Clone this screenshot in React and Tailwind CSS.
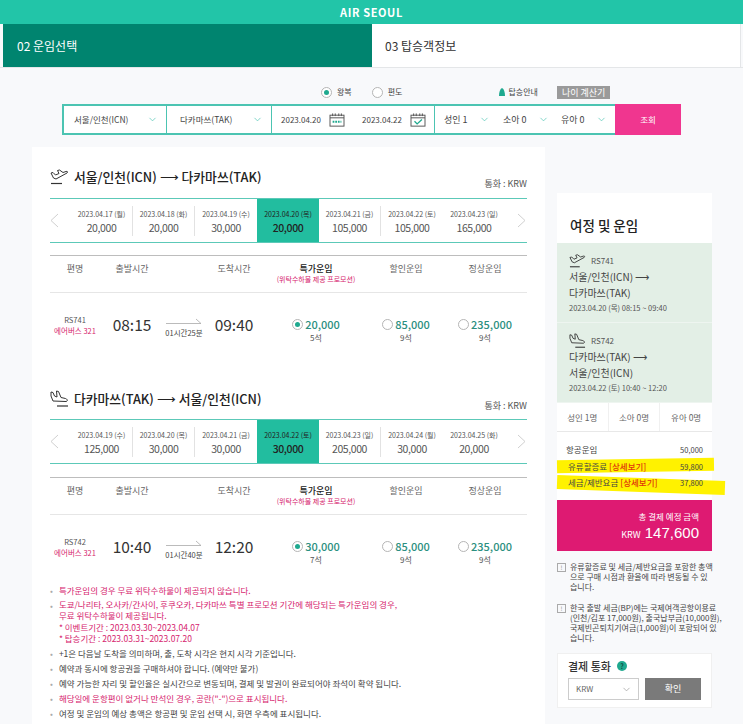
import { ChevronDown } from 'lucide-react'

const FONT = "font-['Noto_Sans_CJK_KR','Noto_Sans',sans-serif]"
const COLS = 'grid-cols-[50px_64px_40px_60px_104px_76px_82px]'

function TakeoffIcon({ className }) {
  return (
    <svg viewBox="0 0 19 18" className={className} fill="none" stroke="#333" strokeWidth="1">
      <path d="M1 5 L3 4.5 L5.5 7 L9 5.5 L7.5 2.5 L9.5 2 L13 4.5 L16 3.5 C17.5 3 18 4 17 5 L6 11 L3.5 10 Z" />
      <path d="M1 15.5 H12" strokeWidth="1.2" />
    </svg>
  )
}

function LandingIcon({ className }) {
  return (
    <svg viewBox="0 0 19 18" className={className} fill="none" stroke="#333" strokeWidth="1">
      <path d="M1 2 L3 2.5 L4.5 6 L7 7 L6.5 1 L8.5 1.5 L11 7.5 L15.5 8.5 C17.5 9 18 11.5 16 11.5 L3 11 L1 6 Z" />
      <path d="M7 16 H18" strokeWidth="1.2" />
    </svg>
  )
}

function CalendarIcon({ check }) {
  return (
    <svg viewBox="0 0 18 16" className="h-[14px] w-4 shrink-0" fill="none" stroke="#555" strokeWidth="1.1">
      <rect x="1" y="2.5" width="16" height="12.5" />
      <path d="M1 5.5 H17 M4 0.5 V3.5 M7 0.5 V3.5 M11 0.5 V3.5 M14 0.5 V3.5" />
      {check ? (
        <path d="M5 9.5 L8 12.5 L13.5 7.5" stroke="#1fa98f" strokeWidth="1.5" />
      ) : (
        <path d="M4 10 H14" stroke="#1fa98f" strokeWidth="2.5" strokeDasharray="2 1" />
      )}
    </svg>
  )
}

function Radio({ on }) {
  return (
    <span className="flex h-[11px] w-[11px] shrink-0 items-center justify-center rounded-full border border-[#b5b5b5] bg-white">
      {on && <span className="h-[5px] w-[5px] rounded-full bg-[#1fa98f]" />}
    </span>
  )
}

function DateStrip({ days, active }) {
  return (
    <div className="flex h-[45px] border-y border-[#5cc9b8]">
      <div className="flex w-[21px] items-center justify-start">
        <svg viewBox="0 0 9 15" className="h-[15px] w-[9px]" fill="none" stroke="#d0d0d0">
          <path d="M8 1 L1 7.5 L8 14" />
        </svg>
      </div>
      {days.map((d, i) => (
        <div key={d[0]} className="flex w-[62px]">
          <div
            className={`flex flex-1 flex-col items-center justify-center pt-[2px] ${i === active ? 'bg-[#22bd9f] text-[#222]' : 'text-[#555]'}`}
          >
            <span className="text-[7px] leading-[12px]">{d[0]}</span>
            <span className={`text-[10.5px] leading-[16px] tracking-[-0.4px] ${i === active ? 'font-medium' : ''}`}>{d[1]}</span>
          </div>
          {i < 5 && i !== active && i + 1 !== active && <span className="h-[30px] w-px self-center bg-[#e2e2e2]" />}
        </div>
      ))}
      <div className="flex w-[21px] items-center justify-end">
        <svg viewBox="0 0 9 15" className="h-[15px] w-[9px]" fill="none" stroke="#d0d0d0">
          <path d="M1 1 L8 7.5 L1 14" />
        </svg>
      </div>
    </div>
  )
}

function FareHead() {
  return (
    <div className={`grid h-[38px] ${COLS} border-y border-t-[#bdbdbd] border-b-[#e6e6e6] pt-[7px] text-center text-[9px] leading-[12px] text-[#666]`}>
      <span>편명</span>
      <span>출발시간</span>
      <span />
      <span>도착시간</span>
      <div className="flex flex-col text-[#222]">
        <span className="font-medium">특가운임</span>
        <span className="text-[7px] leading-[9px] text-[#d6246e]">(위탁수하물 제공 프로모션)</span>
      </div>
      <span>할인운임</span>
      <span>정상운임</span>
    </div>
  )
}

function Fare({ price, seats, on }) {
  return (
    <div className="flex flex-col items-center pt-[23px]">
      <div className="flex items-center gap-[2px]">
        <Radio on={on} />
        <span className="text-[11px] font-medium leading-[16px] text-[#2c8f80]">{price}</span>
      </div>
      <span className="mt-px text-[8px] leading-[10px] text-[#555]">{seats}</span>
    </div>
  )
}

function FlightRow({ no, dep, dur, arr, price, seats }) {
  return (
    <div className={`grid h-[60px] ${COLS} items-start`}>
      <div className="flex flex-col items-center pt-[21px] text-[7.5px] leading-[11px]">
        <span className="text-[#555]">{no}</span>
        <span className="text-[#d6246e]">에어버스 321</span>
      </div>
      <span className="pt-[21px] text-center text-[15.5px] leading-[20px] text-[#333]">{dep}</span>
      <div className="flex flex-col items-center pt-[25px]">
        <svg viewBox="0 0 36 6" className="h-[6px] w-[36px]" fill="none" stroke="#aaa" strokeWidth="0.8">
          <path d="M0 5.5 H35 L30 1" />
        </svg>
        <span className="mt-1 whitespace-nowrap text-[7.5px] leading-[10px] text-[#444]">{dur}</span>
      </div>
      <span className="pt-[21px] text-center text-[15.5px] leading-[20px] text-[#333]">{arr}</span>
      <Fare price={price} seats={seats} on />
      <Fare price="85,000" seats="9석" />
      <Fare price="235,000" seats="9석" />
    </div>
  )
}

function Note({ pink, children }) {
  return (
    <li className={`flex gap-[6px] text-[8.5px] leading-[15px] ${pink ? 'text-[#d6246e]' : 'text-[#444]'}`}>
      <span className="text-[#aaa]">•</span>
      <div>{children}</div>
    </li>
  )
}

function Leg({ icon, no, from, to, date }) {
  return (
    <div className="flex h-[80px] flex-col justify-center border-b border-[#eef5f0] bg-[#e3efe6] pl-[12px] pt-[2px]">
      <div className="flex items-center gap-[5px]">
        {icon}
        <span className="text-[8px] text-[#555]">{no}</span>
      </div>
      <span className="text-[10px] leading-[16px] text-[#444]">{from} ⟶</span>
      <span className="text-[10px] leading-[16px] text-[#444]">{to}</span>
      <span className="text-[7.5px] leading-[13px] text-[#555]">{date}</span>
    </div>
  )
}

function PaxSelect({ label, width }) {
  return (
    <div className={`flex ${width} items-center gap-[11px]`}>
      <span>{label}</span>
      <ChevronDown className="h-[11px] w-[11px] text-[#4cc4b2]" strokeWidth={1.5} />
    </div>
  )
}

export default function App() {
  return (
    <div className={`h-[724px] w-[743px] overflow-hidden bg-[#f8f9fb] ${FONT}`}>
      <div className="flex h-6 items-center justify-center bg-[#22c5a8] text-[11px] font-bold tracking-[0.6px] text-white">
        AIR SEOUL
      </div>

      {/* Tabs */}
      <div className="flex h-[44px] border-b border-[#e4e6e8] pl-[3px] pr-[2px]">
        <div className="flex w-[369px] items-center bg-[#00846f] pl-[14px] text-[12px] text-white">02 운임선택</div>
        <div className="flex flex-1 items-center border-r border-[#e4e6e8] bg-white pl-[13px] text-[12px] text-[#333]">
          03 탑승객정보
        </div>
      </div>

      {/* Trip type */}
      <div className="flex h-[36px] items-center pl-[321px] pt-[12px] text-[8px] text-[#444]">
        <Radio on />
        <span className="ml-[5px]">왕복</span>
        <span className="ml-[20px]">
          <Radio />
        </span>
        <span className="ml-[5px]">편도</span>
        <svg viewBox="0 0 6 9" className="ml-[97px] h-[9px] w-[6px]">
          <path d="M3 0 C5 1 6 4 6 8 H0 C0 4 1 1 3 0 Z" fill="#1fa98f" />
        </svg>
        <span className="ml-[3px]">탑승안내</span>
        <span className="ml-[19px] bg-[#9a9a9a] px-[5px] py-px text-[9px] leading-[11px] text-white">나이 계산기</span>
      </div>

      {/* Search bar */}
      <div className="ml-[62px] flex h-[31px] w-[619px] text-[8px] text-[#444]">
        <div className="flex flex-1 border-2 border-r-0 border-[#4cc4b2] bg-white">
          <div className="flex w-[103px] items-center justify-between border-r border-[#4cc4b2] pl-[10px] pr-[8px] text-[8.5px]">
            <span>서울/인천(ICN)</span>
            <ChevronDown className="h-[11px] w-[11px] text-[#4cc4b2]" strokeWidth={1.5} />
          </div>
          <div className="flex w-[105px] items-center justify-between border-r border-[#4cc4b2] pl-[13px] pr-[8px] text-[8.5px]">
            <span>다카마쓰(TAK)</span>
            <ChevronDown className="h-[11px] w-[11px] text-[#4cc4b2]" strokeWidth={1.5} />
          </div>
          <div className="flex w-[163px] items-center justify-between border-r border-[#4cc4b2] pl-[9px] pr-[8px]">
            <span>2023.04.20</span>
            <CalendarIcon />
            <span className="ml-[9px]">2023.04.22</span>
            <CalendarIcon check />
          </div>
          <div className="flex flex-1 items-center pl-[9px] text-[9px]">
            <PaxSelect label="성인 1" width="w-[59px]" />
            <PaxSelect label="소아 0" width="w-[58px]" />
            <PaxSelect label="유아 0" width="w-[50px]" />
          </div>
        </div>
        <div className="flex w-[66px] items-center justify-center bg-[#f0368f] text-[8.5px] text-white">조회</div>
      </div>

      <div className="mt-[12px] flex">
        {/* Left card */}
        <div className="ml-[32px] h-[577px] w-[513px] bg-white px-[18px]">
          <div className="flex h-[51px] items-end justify-between pb-[4px]">
            <div className="flex items-center gap-[5px] pb-[7px] text-[12.8px] font-medium leading-[20px] text-[#222]">
              <TakeoffIcon className="h-[18px] w-[19px]" />
              서울/인천(ICN) ⟶ 다카마쓰(TAK)
            </div>
            <span className="pb-[4px] text-[9px] text-[#555]">통화 : KRW</span>
          </div>
          <DateStrip
            active={3}
            days={[
              ['2023.04.17 (월)', '20,000'],
              ['2023.04.18 (화)', '20,000'],
              ['2023.04.19 (수)', '30,000'],
              ['2023.04.20 (목)', '20,000'],
              ['2023.04.21 (금)', '105,000'],
              ['2023.04.22 (토)', '105,000'],
              ['2023.04.23 (일)', '165,000'],
            ]}
          />
          <div className="h-3" />
          <FareHead />
          <FlightRow no="RS741" dep="08:15" dur="01시간25분" arr="09:40" price="20,000" seats="5석" />

          <div className="flex h-[66px] items-end justify-between pb-[4px]">
            <div className="flex items-center gap-[5px] pb-[6px] text-[12.8px] font-medium leading-[20px] text-[#222]">
              <LandingIcon className="h-[18px] w-[19px]" />
              다카마쓰(TAK) ⟶ 서울/인천(ICN)
            </div>
            <span className="pb-[3px] text-[9px] text-[#555]">통화 : KRW</span>
          </div>
          <DateStrip
            active={3}
            days={[
              ['2023.04.19 (수)', '125,000'],
              ['2023.04.20 (목)', '30,000'],
              ['2023.04.21 (금)', '30,000'],
              ['2023.04.22 (토)', '30,000'],
              ['2023.04.23 (일)', '205,000'],
              ['2023.04.24 (월)', '30,000'],
              ['2023.04.25 (화)', '20,000'],
            ]}
          />
          <div className="h-[13px]" />
          <FareHead />
          <FlightRow no="RS742" dep="10:40" dur="01시간40분" arr="12:20" price="30,000" seats="7석" />

          <ul className="mt-[8px]">
            <Note pink>특가운임의 경우 무료 위탁수하물이 제공되지 않습니다.</Note>
            <Note pink>
              <div className="pb-[2px] pt-px">
                <p className="leading-[11px]">도쿄/나리타, 오사카/간사이, 후쿠오카, 다카마쓰 특별 프로모션 기간에 해당되는 특가운임의 경우,</p>
                <p className="leading-[11px]">무료 위탁수하물이 제공됩니다.</p>
                <p className="pt-px leading-[11px]">* 이벤트기간 : 2023.03.30~2023.04.07</p>
                <p className="leading-[11px]">* 탑승기간 : 2023.03.31~2023.07.20</p>
              </div>
            </Note>
            <Note>+1은 다음날 도착을 의미하며, 출, 도착 시각은 현지 시각 기준입니다.</Note>
            <Note>예약과 동시에 항공권을 구매하셔야 합니다. (예약만 불가)</Note>
            <Note>예약 가능한 자리 및 할인율은 실시간으로 변동되며, 결제 및 발권이 완료되어야 좌석이 확약 됩니다.</Note>
            <Note pink>해당일에 운항편이 없거나 만석인 경우, 공란(&quot;-&quot;)으로 표시됩니다.</Note>
            <Note>여정 및 운임의 예상 총액은 항공편 및 운임 선택 시, 화면 우측에 표시됩니다.</Note>
          </ul>
        </div>

        {/* Sidebar */}
        <div className="ml-[12px] mt-[46px] w-[155px]">
          <div className="flex h-[50px] items-end bg-white pb-[8px] pl-[13px] text-[13.5px] font-medium text-[#222]">여정 및 운임</div>
          <Leg
            icon={<TakeoffIcon className="h-[16px] w-[17px]" />}
            no="RS741"
            from="서울/인천(ICN)"
            to="다카마쓰(TAK)"
            date="2023.04.20 (목) 08:15 ~ 09:40"
          />
          <Leg
            icon={<LandingIcon className="h-[16px] w-[17px]" />}
            no="RS742"
            from="다카마쓰(TAK)"
            to="서울/인천(ICN)"
            date="2023.04.22 (토) 10:40 ~ 12:20"
          />
          <div className="grid h-[29px] grid-cols-3 divide-x divide-[#f0f0f0] border-b border-[#e8e8e8] bg-white text-center text-[8.5px] leading-[28px] text-[#666]">
            <span>성인 1명</span>
            <span>소아 0명</span>
            <span>유아 0명</span>
          </div>
          <div className="relative h-[68px] bg-white px-[9px] pt-[10px] text-[8.5px] text-[#444]">
            {/* marker pen strokes over the screenshot */}
            <div className="absolute left-0 top-[27px] h-[13px] w-[157px] -rotate-1 bg-[#fff200]" />
            <div className="absolute left-0 top-[46px] h-[14px] w-[168px] rotate-2 bg-[#fff200]" />
            <div className="relative flex h-[15px] items-center justify-between">
              <span>항공운임</span>
              <span className="text-[7.5px]">50,000</span>
            </div>
            <div className="relative mt-[2px] flex h-[15px] items-center justify-between">
              <span className="pl-[2px]">
                유류할증료 <b className="font-medium text-[#e0350c]">[상세보기]</b>
              </span>
              <span className="text-[7.5px]">59,800</span>
            </div>
            <div className="relative mt-px flex h-[15px] items-center justify-between">
              <span className="pl-[2px]">
                세금/제반요금 <b className="font-medium text-[#e0350c]">[상세보기]</b>
              </span>
              <span className="text-[7.5px]">37,800</span>
            </div>
          </div>
          <div className="flex h-[51px] flex-col items-end justify-center bg-[#de1a72] pr-[13px] pt-[3px] text-white">
            <span className="text-[8.5px] leading-[13px]">총 결제 예정 금액</span>
            <div className="flex items-baseline gap-[4px] leading-[20px]">
              <span className="text-[9px] leading-[20px]">KRW</span>
              <span className="font-['Liberation_Sans',sans-serif] text-[15px] leading-[20px]">147,600</span>
            </div>
          </div>

          <div className="mt-[11px] flex w-[163px] gap-[4px] whitespace-nowrap text-[8px] leading-[10px] text-[#444]">
            <span className="mt-px flex h-[9px] w-[9px] shrink-0 items-center justify-center border border-[#aaa] text-[6px] text-[#888]">!</span>
            <p>
              유류할증료 및 세금/제반요금을 포함한 총액
              <br />
              으로 구매 시점과 환율에 따라 변동될 수 있
              <br />
              습니다.
            </p>
          </div>
          <div className="mt-[11px] flex w-[163px] gap-[4px] whitespace-nowrap text-[8px] leading-[10px] text-[#444]">
            <span className="mt-px flex h-[9px] w-[9px] shrink-0 items-center justify-center border border-[#aaa] text-[6px] text-[#888]">!</span>
            <p>
              한국 출발 세금(BP)에는 국제여객공항이용료
              <br />
              (인천/김포 17,000원), 출국납부금(10,000원),
              <br />
              국제빈곤퇴치기여금(1,000원)이 포함되어 있
              <br />
              습니다.
            </p>
          </div>

          <div className="mt-[10px] h-[55px] border border-[#f0f0f0] bg-white px-[10px] pt-[5px]">
            <div className="flex items-center gap-[6px] text-[11px] font-medium leading-[14px] text-[#333]">
              결제 통화
              <span className="flex h-[10px] w-[10px] items-center justify-center rounded-full bg-[#1fa98f] text-[7px] text-[#0b4a3d]">?</span>
            </div>
            <div className="mt-[5px] flex gap-[6px]">
              <div className="flex h-[22px] w-[71px] items-center justify-between border border-[#cccccc] pl-[7px] pr-[6px] text-[8px] text-[#666]">
                KRW
                <ChevronDown className="h-[11px] w-[11px] text-[#999]" strokeWidth={1.5} />
              </div>
              <div className="flex h-[22px] w-[56px] items-center justify-center bg-[#7a7a7a] text-[9px] text-white">확인</div>
            </div>
          </div>
        </div>
      </div>
    </div>
  )
}
